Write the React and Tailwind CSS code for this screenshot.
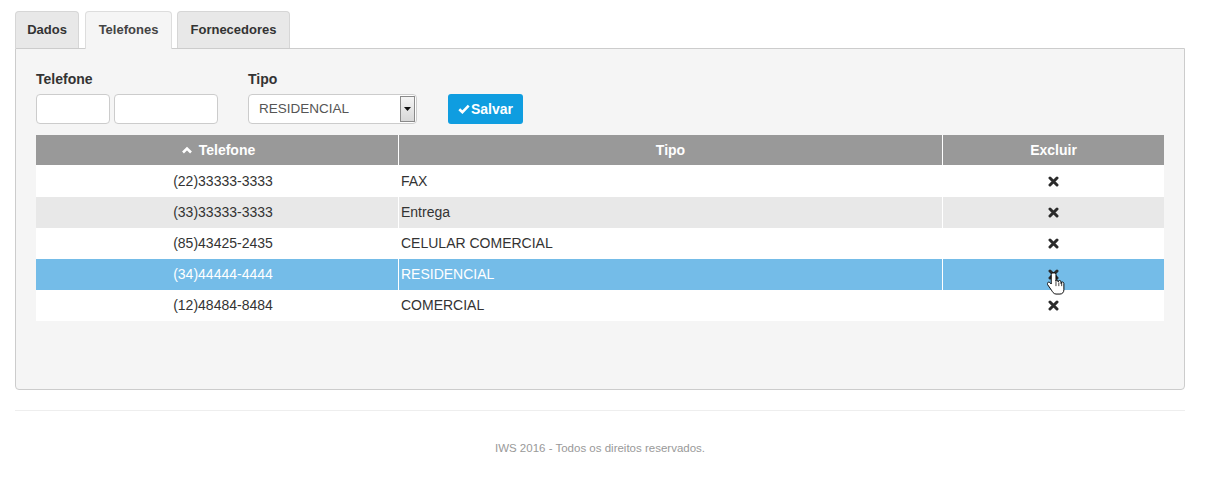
import React from 'react';

const rows = [
  { tel: '(22)33333-3333', tipo: 'FAX', bg: 'bg-white' },
  { tel: '(33)33333-3333', tipo: 'Entrega', bg: 'bg-[#e8e8e8]' },
  { tel: '(85)43425-2435', tipo: 'CELULAR COMERCIAL', bg: 'bg-white' },
  { tel: '(34)44444-4444', tipo: 'RESIDENCIAL', bg: 'bg-[#74bce8]', selected: true },
  { tel: '(12)48484-8484', tipo: 'COMERCIAL', bg: 'bg-white' },
];

// ícone "remover" (estilo font awesome)
const RemoveIcon = () => (
  <svg width="11" height="11" viewBox="0 0 11 11">
    <path d="M2 2 L9 9 M9 2 L2 9" stroke="#2b2b2b" strokeWidth="3" strokeLinecap="round" />
  </svg>
);

const HandCursor = () => (
  <svg width="19" height="27" viewBox="0 0 18 23" className="absolute left-[1047px] top-[270px]">
    <path
      d="M5.5 1.5c-.8 0-1.5.7-1.5 1.5v9l-1.2-1.3c-.6-.6-1.6-.6-2.1 0-.5.5-.5 1.3-.1 1.9l3.6 5.2c.8 1.2 2 3.7 4.3 3.7h3.8c2.3 0 3.7-1.8 3.7-4v-6c0-.8-.6-1.4-1.4-1.4s-1.3.6-1.3 1.4V10c0-.8-.6-1.4-1.4-1.4s-1.4.6-1.4 1.4v-.5c0-.8-.6-1.4-1.4-1.4S8.5 8.7 8.5 9.5V3c0-.8-.7-1.5-1.5-1.5z"
      fill="white"
      stroke="black"
      strokeWidth="0.9"
    />
    <path d="M8.5 10v4M11.2 10.5v3.5M13.9 11v3" stroke="black" strokeWidth="0.7" />
  </svg>
);

export default function App() {
  return (
    <div className="relative min-h-[478px] bg-white px-[15px] pt-[11px] text-[14px] text-[#333]" style={{ fontFamily: '"Liberation Sans", Arial, sans-serif' }}>
      <div className="w-[1170px]">
        {/* abas */}
        <div className="flex items-end gap-[5px] text-[13px] font-bold">
          <div className="flex h-[37px] w-[64px] items-center justify-center rounded-t-[4px] border border-b-0 border-[#d6d6d6] bg-[#e8e8e8]">Dados</div>
          <div className="relative z-10 -mb-px ml-px flex h-[38px] w-[87px] items-center justify-center rounded-t-[4px] border border-b-0 border-[#ddd] bg-[#f5f5f5] pb-px text-[#444]">Telefones</div>
          <div className="flex h-[37px] w-[113px] items-center justify-center rounded-t-[4px] border border-b-0 border-[#d6d6d6] bg-[#e8e8e8]">Fornecedores</div>
        </div>

        {/* painel */}
        <div className="h-[342px] rounded-b-[4px] border border-[#ccc] bg-[#f5f5f5] px-[20px] pt-[21px]">
          <div className="flex items-end">
            <div className="flex flex-col">
              <label className="mb-[6px] h-[18px] font-bold leading-[18px]">Telefone</label>
              <div className="flex gap-[4px]">
                <input className="h-[30px] w-[74px] rounded-[4px] border border-[#ccc] bg-white" />
                <input className="h-[30px] w-[104px] rounded-[4px] border border-[#ccc] bg-white" />
              </div>
            </div>
            <div className="ml-[30px] flex flex-col">
              <label className="mb-[6px] h-[18px] font-bold leading-[18px]">Tipo</label>
              <div className="flex h-[30px] w-[169px] items-center rounded-[4px] border border-[#ccc] bg-white pl-[10px] pr-[1px] text-[13.5px] text-[#555]">
                <span className="flex-1">RESIDENCIAL</span>
                <span className="flex h-[26px] w-[15px] items-center justify-center border border-[#8a8a8a] bg-gradient-to-b from-[#f4f4f4] to-[#d8d8d8]">
                  <svg width="7" height="4" viewBox="0 0 7 4"><path d="M0 0h7L3.5 4z" fill="#111" /></svg>
                </span>
              </div>
            </div>
            <button className="ml-[31px] flex h-[30px] w-[75px] items-center justify-center gap-[1px] rounded-[3px] bg-[#0f9de0] font-bold text-white">
              <svg width="12" height="10" viewBox="0 0 12 10"><path d="M1.3 5.2 L4.4 8.2 L10.7 1.7" stroke="white" strokeWidth="2.6" fill="none" /></svg>
              Salvar
            </button>
          </div>

          {/* tabela */}
          <div className="mt-[11px]">
            <div className="grid h-[31px] grid-cols-[362px_544px_1fr] border-b border-white bg-[#999] font-bold text-white">
              <div className="flex items-center justify-center gap-[7px] pl-[3px]">
                <svg width="10" height="8" viewBox="0 0 10 8"><path d="M1 6.5 L5 2.5 L9 6.5" stroke="white" strokeWidth="2.6" fill="none" /></svg>
                Telefone
              </div>
              <div className="flex items-center justify-center border-l border-white">Tipo</div>
              <div className="flex items-center justify-center border-l border-white">Excluir</div>
            </div>
            {rows.map((r) => (
              <div key={r.tel} className={`grid h-[31px] grid-cols-[362px_544px_1fr] ${r.bg} ${r.selected ? 'text-white' : ''}`}>
                <div className="flex items-center justify-center pl-[12px]">{r.tel}</div>
                <div className="flex items-center border-l border-white pl-[2px]">{r.tipo}</div>
                <div className="flex items-center justify-center border-l border-white">
                  <RemoveIcon />
                </div>
              </div>
            ))}
          </div>
        </div>

        {/* rodapé */}
        <div className="mt-[20px] border-t border-[#eee] pt-[29px] text-center text-[11.5px] text-[#999]">
          IWS 2016 - Todos os direitos reservados.
        </div>
      </div>

      <HandCursor />
    </div>
  );
}
